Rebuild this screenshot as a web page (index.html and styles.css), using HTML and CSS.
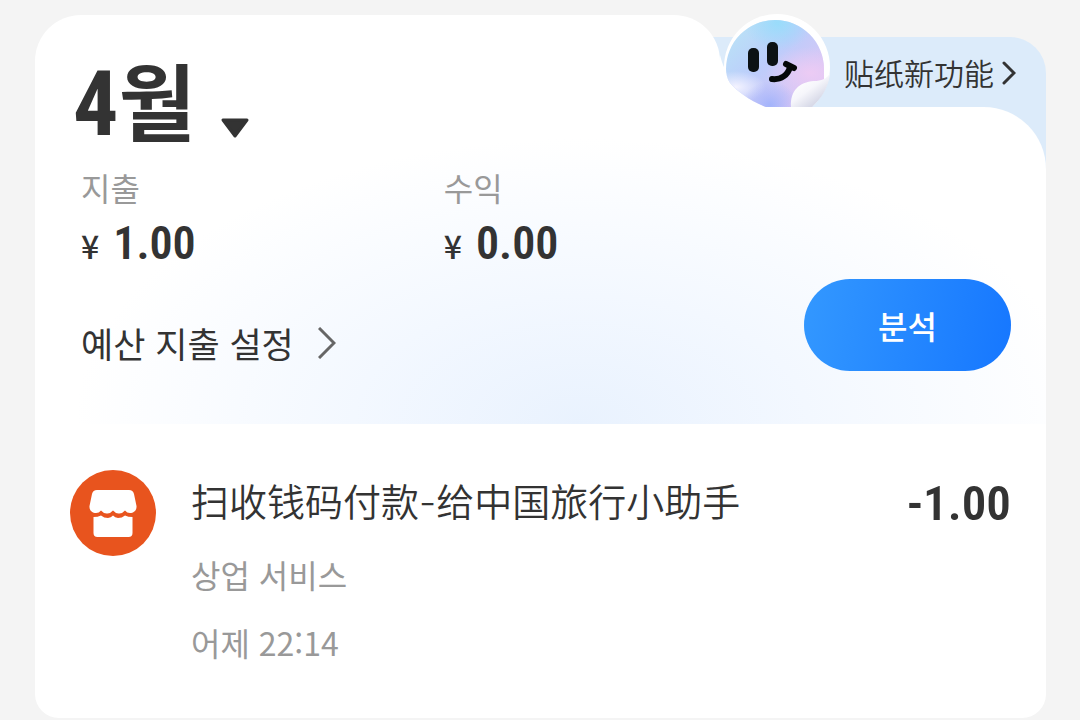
FILE: index.html
```
<!DOCTYPE html>
<html lang="ko">
<head>
  <meta charset="UTF-8" />
  <meta name="viewport" content="width=device-width, initial-scale=1" />
  <title>4월</title>
  <link rel="stylesheet" href="styles.css">
</head>
<body>
  <main class="card">
    <div class="card-top">
      <div class="tab"></div>
      <a class="promo" href="#" lang="zh-CN">
        <svg class="sticker" viewBox="0 0 120 102" aria-hidden="true">
          <defs>
            <linearGradient id="base" x1="0.1" y1="0.1" x2="0.9" y2="0.8">
              <stop offset="0" stop-color="#b9e9f5" />
              <stop offset="0.5" stop-color="#bccdfb" />
              <stop offset="1" stop-color="#e0c4f3" />
            </linearGradient>
            <radialGradient id="sky">
              <stop offset="0" stop-color="#99dcfb" />
              <stop offset="1" stop-color="#99dcfb" stop-opacity="0" />
            </radialGradient>
            <radialGradient id="pink">
              <stop offset="0" stop-color="#eccbf4" />
              <stop offset="1" stop-color="#eccbf4" stop-opacity="0" />
            </radialGradient>
            <radialGradient id="pale">
              <stop offset="0" stop-color="#f4f3ff" />
              <stop offset="1" stop-color="#f4f3ff" stop-opacity="0" />
            </radialGradient>
            <radialGradient id="blue">
              <stop offset="0" stop-color="#a3b4fb" />
              <stop offset="1" stop-color="#a3b4fb" stop-opacity="0" />
            </radialGradient>
            <linearGradient id="peel" x1="0.2" y1="0.2" x2="0.7" y2="0.8">
              <stop offset="0" stop-color="#ffffff" />
              <stop offset="0.5" stop-color="#f6f6fb" />
              <stop offset="1" stop-color="#d8dae8" />
            </linearGradient>
            <clipPath id="face">
              <path d="M50 102C34 96 22 87 14 78C11 74 10 68 10 64A49 49 0 0 1 108 64V74L96 102Z" />
            </clipPath>
          </defs>
          <circle cx="61" cy="62" r="53" fill="#fff" />
          <path fill="#fff" d="M4 50Q6 58 8 62L60 102H4Z" />
          <g clip-path="url(#face)">
            <rect width="120" height="102" fill="url(#base)" />
            <ellipse cx="62" cy="18" rx="34" ry="28" fill="url(#sky)" />
            <ellipse cx="94" cy="68" rx="44" ry="26" fill="url(#pink)" />
            <ellipse cx="20" cy="82" rx="30" ry="16" fill="url(#pale)" />
            <ellipse cx="54" cy="100" rx="28" ry="24" fill="url(#blue)" />
          </g>
          <path fill="url(#peel)" d="M75 102C74 86 83 77 98 76C105 76 111 74 114 68C113 82 105 94 96 102Z" />
          <rect x="32" y="43" width="11" height="24" rx="5" fill="#0c1214" />
          <rect x="51" y="37" width="11" height="24" rx="5" fill="#0c1214" />
          <path fill="none" stroke="#050808" stroke-width="6" stroke-linecap="round" d="M56 74C65 75 72 70 74 62M70 59L78 63" />
        </svg>
        <span>贴纸新功能</span>
        <svg class="promo-arrow" viewBox="0 0 14 24" aria-hidden="true">
          <path d="M2 2L12 12L2 22" />
        </svg>
      </a>
    </div>

    <section class="summary">
      <h1>
        <button class="month-btn">
          <span><span class="month-number">4</span>월</span>
          <svg class="caret" viewBox="0 0 30 22" aria-hidden="true">
            <path d="M3 3H27L15 19Z" />
          </svg>
        </button>
      </h1>
      <dl class="stats">
        <div class="stat">
          <dt>지출</dt>
          <dd><span class="currency">¥</span>1.00</dd>
        </div>
        <div class="stat">
          <dt>수익</dt>
          <dd><span class="currency">¥</span>0.00</dd>
        </div>
      </dl>
      <div class="actions">
        <a class="budget-link" href="#">예산 지출 설정
          <svg class="budget-arrow" viewBox="0 0 18 32" aria-hidden="true">
            <path d="M1 1L16 16L1 31" />
          </svg>
        </a>
        <button class="analyze-btn">분석</button>
      </div>
    </section>

    <ul class="records">
      <li class="record">
        <svg class="shop-icon" viewBox="0 0 86 86" aria-hidden="true">
          <circle cx="43" cy="43" r="43" fill="#e8541e" />
          <path fill="#fff" d="M27 20H59Q63 20 64 24L66.500 36C67 40 64 43 60 43Q57 43 55 40.500Q52 44 48.500 43.500Q45 43 43 40.500Q41 43 37.500 43.500Q34 44 31 40.500Q29 43 26 43C22 43 19 40 19.500 36L22 24Q23 20 27 20Z" />
          <path fill="#fff" d="M23.500 47Q28 47 31 45.500Q34 48 38 48Q41 47.500 43 45.500Q45 47.500 48 48Q52 48 55 45.500Q58 47 62.500 47V63Q62.500 67 58.500 67H27.500Q23.500 67 23.500 63Z" />
        </svg>
        <div class="record-info">
          <h2 lang="zh-CN">扫收钱码付款-给中国旅行小助手</h2>
          <p>상업 서비스</p>
          <p>어제 22:14</p>
        </div>
        <strong class="record-amount">-1.00</strong>
      </li>
    </ul>
  </main>
</body>
</html>
```
FILE: styles.css
```
* {
  box-sizing: border-box;
  margin: 0;
  padding: 0;
}

body {
  font-family: "Noto Sans CJK KR", sans-serif;
  background: #f4f4f4;
  color: #333;
  padding: 15px 34px 2px 35px;
}

:lang(zh-CN) {
  font-family: "Noto Sans CJK SC", sans-serif;
}

button {
  font: inherit;
  color: inherit;
  border: none;
  background: none;
  cursor: pointer;
}

a {
  color: inherit;
  text-decoration: none;
}

svg {
  flex: none;
}

/* top edge: white tab on the left, promo strip tucked in behind it */
.card-top {
  display: flex;
  height: 92px;
}

.tab {
  flex: 1;
  background: #fff;
  border-radius: 46px 46px 0 0;
  z-index: 1;
}

.promo {
  display: flex;
  align-items: flex-start;
  height: 140px;
  margin-top: 22px;
  margin-left: -50px;
  padding-left: 46px;
  padding-right: 30px;
  background: #dcebfa;
  border-radius: 0 36px 0 0;
  font-size: 30px;
  font-weight: 350;
  line-height: 70px;
}

.sticker {
  width: 120px;
  height: 102px;
  margin-top: -32px;
  margin-right: 8px;
  position: relative;
  z-index: 2;
}

.promo-arrow {
  width: 14px;
  height: 24px;
  margin: 24px 0 0 8px;
  fill: none;
  stroke: #333;
  stroke-width: 3;
  stroke-linecap: round;
}

.summary {
  display: flex;
  flex-direction: column;
  position: relative;
  z-index: 1;
  padding: 0 35px 53px 46px;
  background: radial-gradient(ellipse 50% 90% at 54% 100%, #e9f2fe, #f3f8ff 45%, #fff) #fff;
  border-radius: 0 62px 0 0;
}

h1 {
  height: 96px;
  margin-top: -56px;
  margin-left: -8px;
  font-size: 84px;
  line-height: 96px;
}

.month-btn {
  display: flex;
  align-items: center;
  gap: 24px;
  font-weight: 700;
}

.month-number {
  font-family: "Roboto Condensed", "Noto Sans CJK KR", sans-serif;
  font-size: 90px;
  line-height: 1;
}

.caret {
  width: 30px;
  height: 22px;
  margin-top: 54px;
  fill: #333;
  stroke: #333;
  stroke-width: 3;
  stroke-linejoin: round;
}

.stats {
  display: grid;
  grid-template-columns: 39% 1fr;
  margin-top: 20px;
}

.stat dt {
  font-size: 32px;
  line-height: 40px;
  color: #999;
}

.stat dd {
  height: 50px;
  margin-top: 10px;
  font-family: "Roboto Condensed", "Noto Sans CJK KR", sans-serif;
  font-size: 46px;
  font-weight: 600;
  line-height: 52px;
}

.currency {
  margin-right: 14px;
  font-family: "Noto Sans CJK KR", sans-serif;
  font-size: 32px;
  font-weight: 500;
  line-height: 1;
}

.actions {
  display: flex;
  justify-content: space-between;
  margin-top: 12px;
}

.budget-link {
  display: flex;
  align-items: center;
  gap: 24px;
  height: 44px;
  margin-top: 42px;
  font-size: 35px;
  line-height: 44px;
}

.budget-arrow {
  width: 18px;
  height: 32px;
  fill: none;
  stroke: #666;
  stroke-width: 3;
}

.analyze-btn {
  width: 207px;
  height: 92px;
  border-radius: 46px;
  background: linear-gradient(100deg, #3398ff, #1677ff);
  color: #fff;
  font-size: 32px;
  font-weight: 500;
}

.records {
  list-style: none;
  padding: 46px 35px 56px;
  background: #fff;
  border-radius: 0 0 24px 24px;
}

.record {
  display: flex;
  gap: 35px;
}

.shop-icon {
  width: 86px;
  height: 86px;
}

.record-info {
  flex: 1;
  padding-top: 8px;
}

.record-info h2 {
  font-family: Inter, "Noto Sans CJK SC", sans-serif;
  font-size: 38px;
  font-weight: 350;
  line-height: 48px;
}

.record-info p {
  margin-top: 28px;
  font-size: 32px;
  line-height: 40px;
  color: #999;
}

.record-amount {
  padding-top: 8px;
  font-family: "Roboto Condensed", "Noto Sans CJK KR", sans-serif;
  font-size: 49px;
  font-weight: 600;
  line-height: 52px;
}
```
